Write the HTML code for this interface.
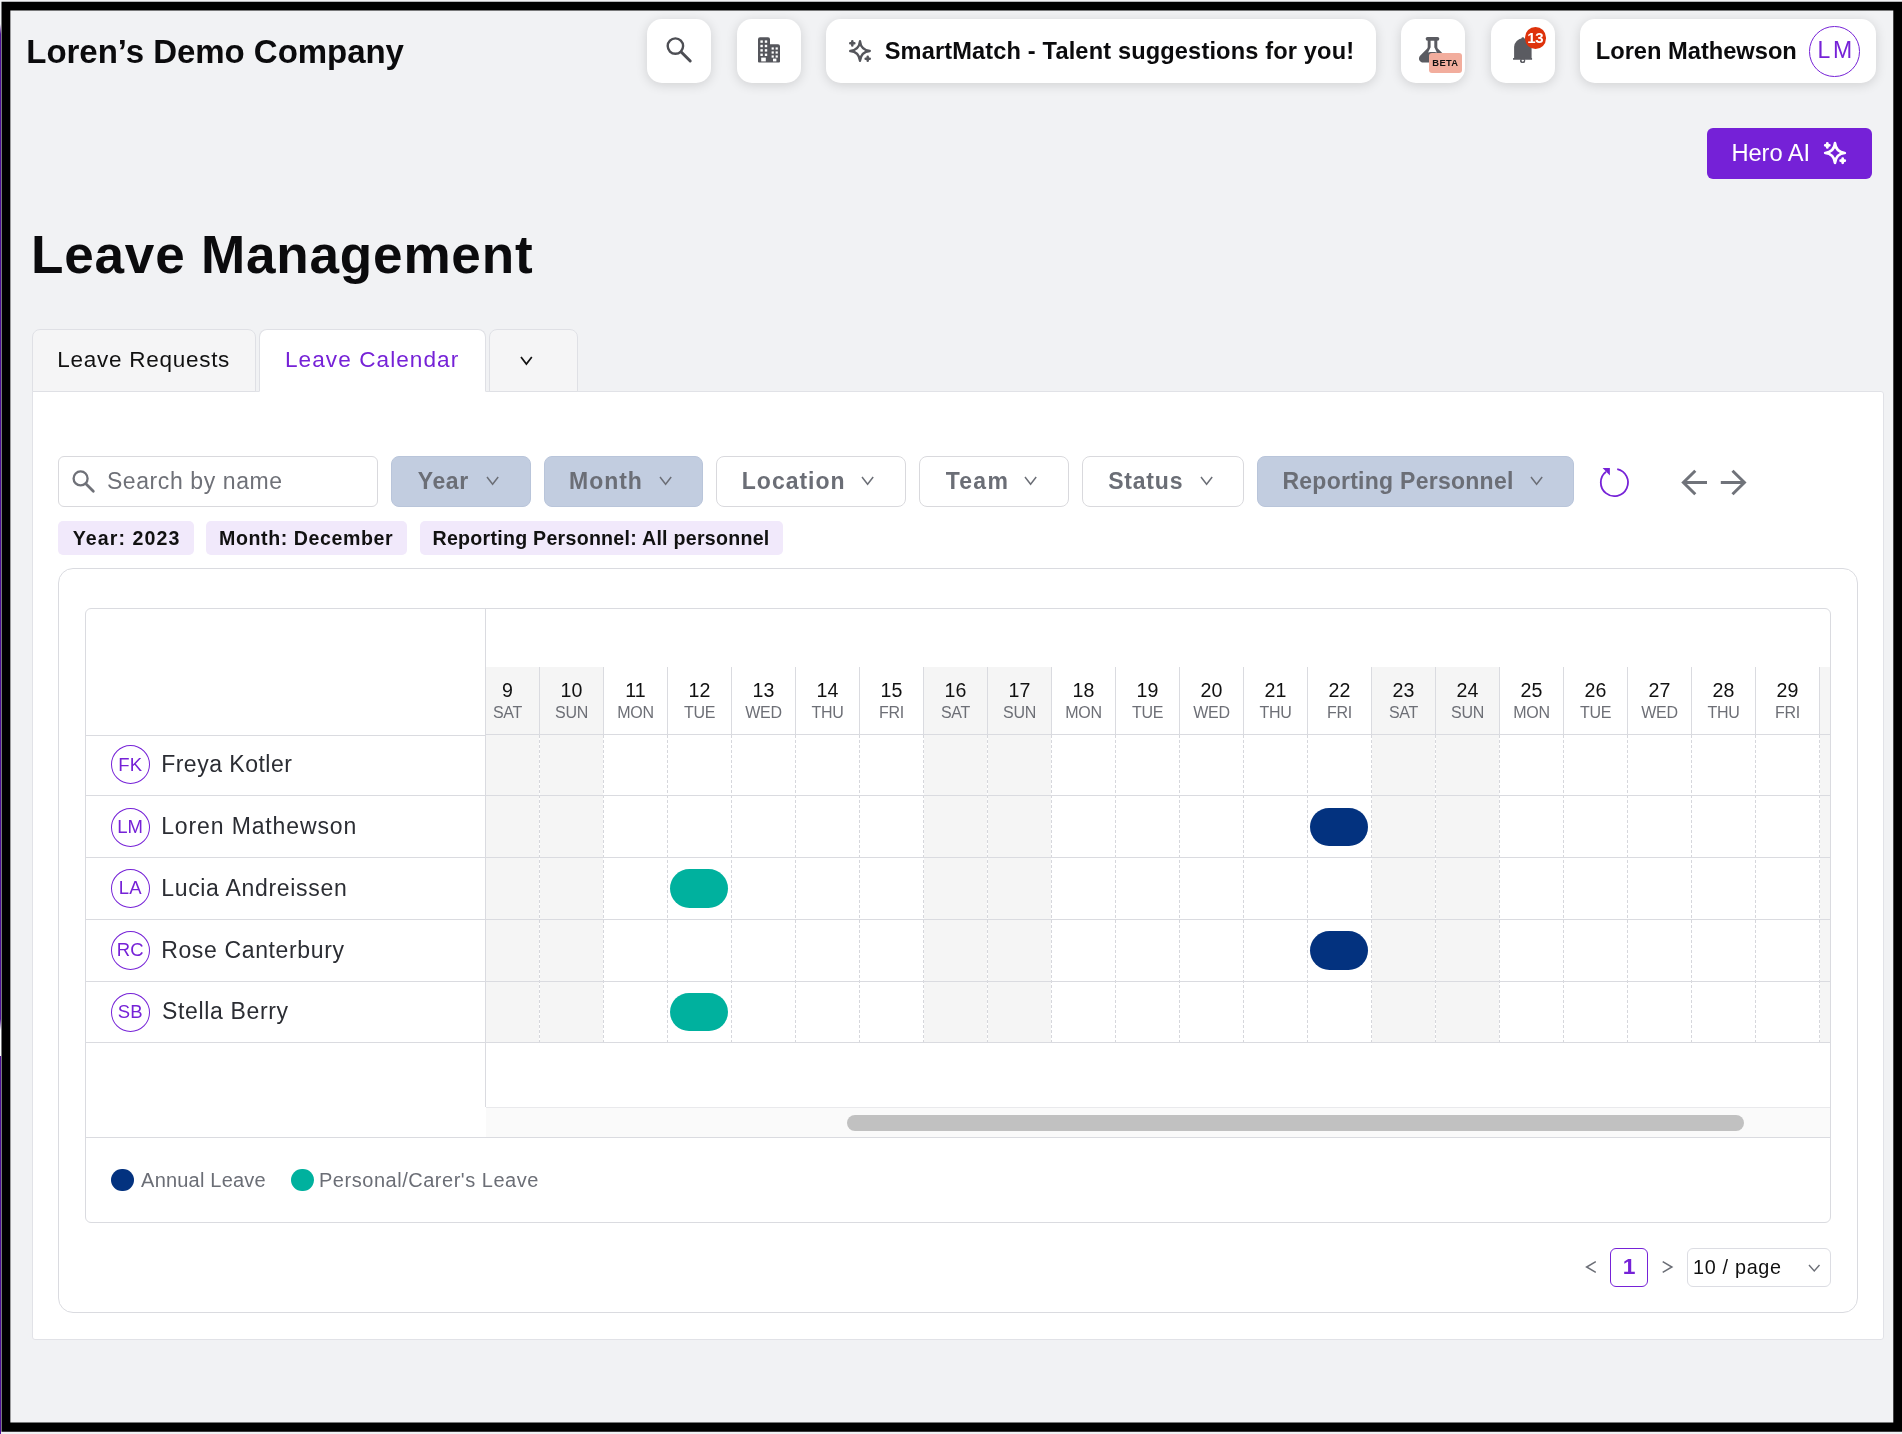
<!DOCTYPE html>
<html lang="en"><head><meta charset="utf-8"><title>Leave Management</title><style>
html,body{margin:0;padding:0;}
body{width:1902px;height:1434px;position:relative;overflow:hidden;font-family:"Liberation Sans", sans-serif;background:#f1f2f4;}
#root{position:absolute;left:0;top:0;width:1902px;height:1434px;will-change:transform;}
.t{position:absolute;white-space:nowrap;margin:0;font-weight:400;}
.a{position:absolute;overflow:visible;}
</style></head><body>
<div id="root">
<div style="position:absolute;left:0px;top:24px;width:1.3px;height:1410px;background:linear-gradient(#f1f2f4,#4f0f99 10px,#4f0f99);"></div>
<div style="position:absolute;left:0px;top:1019px;width:1.3px;height:37px;background:linear-gradient(#4f0f99,#fff 11px,#fff);"></div>
<svg class="a" style="left:0;top:0" width="1902" height="1434" viewBox="0 0 1902 1434"><path fill="#000" fill-rule="evenodd" d="M1.5 1.7H1903V1431.7H1.5Z M10.35 10.5H1893.3V1422.4H10.35Z"/></svg>
<header>
<span class="t" style="top:35.07px;font-size:33px;line-height:33px;color:#0b0b0d;font-weight:700;letter-spacing:-0.036px;left:26.32px;">Loren’s Demo Company</span>
<div style="position:absolute;left:647px;top:19px;width:64px;height:64px;background:#fff;border-radius:15px;box-shadow:0 2px 12px rgba(0,0,10,.14);"></div>
<div style="position:absolute;left:737px;top:19px;width:64px;height:64px;background:#fff;border-radius:15px;box-shadow:0 2px 12px rgba(0,0,10,.14);"></div>
<div style="position:absolute;left:826px;top:19px;width:550px;height:64px;background:#fff;border-radius:15px;box-shadow:0 2px 12px rgba(0,0,10,.14);"></div>
<div style="position:absolute;left:1401px;top:19px;width:64px;height:64px;background:#fff;border-radius:15px;box-shadow:0 2px 12px rgba(0,0,10,.14);"></div>
<div style="position:absolute;left:1491px;top:19px;width:64px;height:64px;background:#fff;border-radius:15px;box-shadow:0 2px 12px rgba(0,0,10,.14);"></div>
<div style="position:absolute;left:1580px;top:19px;width:296px;height:64px;background:#fff;border-radius:15px;box-shadow:0 2px 12px rgba(0,0,10,.14);"></div>
<svg class="a" style="left:660px;top:32px" width="40" height="40" viewBox="0 0 40 40"><circle cx="15.4" cy="14.1" r="7.7" fill="none" stroke="#4d4e54" stroke-width="2.4"/><path d="M21.2 20 L30.2 29" stroke="#4d4e54" stroke-width="3" stroke-linecap="round"/></svg>
<svg class="a" style="left:757px;top:36px" width="24" height="28" viewBox="0 0 24 28"><path fill="#55565c" d="M1 3.3a2 2 0 0 1 2-2h8a2 2 0 0 1 2 2v4.9h8a2 2 0 0 1 2 2v15.4a1 1 0 0 1-1 1H2a1 1 0 0 1-1-1z"/><g fill="#fff"><rect x="3.4" y="4.4" width="2.4" height="2.4"/><rect x="7.8" y="4.4" width="2.4" height="2.4"/><rect x="3.4" y="8.8" width="2.4" height="2.4"/><rect x="7.8" y="8.8" width="2.4" height="2.4"/><rect x="3.4" y="13.2" width="2.4" height="2.4"/><rect x="7.8" y="13.2" width="2.4" height="2.4"/><rect x="3.4" y="17.6" width="2.4" height="2.4"/><rect x="7.8" y="17.6" width="2.4" height="2.4"/><rect x="4.2" y="21.6" width="4.6" height="3.8"/><rect x="14.6" y="11.4" width="2.2" height="2.2"/><rect x="18.6" y="11.4" width="2.2" height="2.2"/><rect x="14.6" y="15.4" width="2.2" height="2.2"/><rect x="18.6" y="15.4" width="2.2" height="2.2"/><rect x="14.6" y="19.4" width="2.2" height="2.2"/><rect x="18.6" y="19.4" width="2.2" height="2.2"/><rect x="16" y="22.6" width="3.4" height="2.8"/></g></svg>
<svg class="a" style="left:845.8px;top:36.7px" width="28" height="28" viewBox="-14 -14 28 28" fill="none" stroke="#55565c" stroke-linecap="round" stroke-linejoin="round"><path stroke-width="2.3" d="M0 -9.800C.6 -3.900 3.900 -.6 9.800 0C3.900 .6 .6 3.900 0 9.800C-.6 3.900 -3.900 .6 -9.800 0C-3.900 -.6 -.6 -3.900 0 -9.800Z"/><path stroke-width="2.5" d="M-7.700 -9.700v4.100M-9.750 -7.650h4.100M7.700 5.650v4.100M5.650 7.700h4.100"/></svg>
<span class="t" style="top:39.62px;font-size:23.6px;line-height:23.6px;color:#0b0b0d;font-weight:700;letter-spacing:0.149px;left:884.63px;">SmartMatch - Talent suggestions for you!</span>
<svg class="a" style="left:1417px;top:36px" width="32" height="28" viewBox="0 0 32 28"><path fill="#5a5b61" d="M10.7 4.7H10.5a1.85 1.85 0 0 1 0-3.700h10a1.850 1.850 0 0 1 0 3.700h-.2V10.800c0 1.100.5 1.800 1.200 2.500l6.200 6.200c2.600 2.600 1.200 7.100-3.200 7.100H6.500c-4.400 0-5.800-4.500-3.200-7.100l6.200-6.200c.7-.7 1.200-1.400 1.200-2.500z"/><path fill="#fff" d="M13.600 4.700h3.700v6.500l2.600 5.200c-3-.5-5.800-.5-8.800 0l2.500-5.200z"/></svg>
<div style="position:absolute;left:1429.1px;top:53.1px;width:32.8px;height:19.9px;background:#f2ad9d;border-radius:3px;"></div>
<span class="t" style="top:57.84px;font-size:9.4px;line-height:9.4px;color:#111;font-weight:700;letter-spacing:0.327px;left:1432.34px;">BETA</span>
<svg class="a" style="left:1510px;top:35px" width="26" height="30" viewBox="0 0 26 30"><g fill="#5a5b61"><circle cx="12.85" cy="3.600" r="1.400"/><path d="M4.100 23.200V12.100a8.750 8.750 0 0 1 17.500 0V23.200z"/><rect x="3" y="22.900" width="19.100" height="1.950" rx=".5"/></g><path fill="none" stroke="#5a5b61" stroke-width="1.200" d="M10.700 25a2 2 0 0 0 4 .6"/><circle cx="12.700" cy="25.600" r="1.900" fill="none" stroke="#5a5b61" stroke-width="1.200"/></svg>
<div style="position:absolute;left:1525px;top:27.2px;width:21.4px;height:21.4px;background:#de320b;border-radius:50%;"></div>
<span class="t" style="top:30.40px;font-size:15px;line-height:15px;color:#fff;font-weight:700;letter-spacing:-0.342px;left:1527.2px;">13</span>
<span class="t" style="top:39.64px;font-size:23.7px;line-height:23.7px;color:#0b0b0d;font-weight:700;letter-spacing:-0.021px;left:1595.78px;">Loren Mathewson</span>
<div style="position:absolute;left:1809px;top:26px;width:50.6px;height:50.6px;border:1.3px solid #7622d7;border-radius:50%;box-sizing:border-box;"></div>
<span class="t" style="top:38.63px;font-size:23px;line-height:23px;color:#7622d7;letter-spacing:2.768px;left:1817.46px;">LM</span>
</header>
<main>
<div style="position:absolute;left:1707px;top:128px;width:165px;height:51px;background:#7521d7;border-radius:6px;"></div>
<span class="t" style="top:141.74px;font-size:23.7px;line-height:23.7px;color:#fff;letter-spacing:-0.061px;left:1731.4px;">Hero AI</span>
<svg class="a" style="left:1820.6px;top:138.7px" width="28" height="28" viewBox="-14 -14 28 28" fill="none" stroke="#fff" stroke-linecap="round" stroke-linejoin="round"><path stroke-width="2.7" d="M0 -9.800C.6 -3.900 3.900 -.6 9.800 0C3.900 .6 .6 3.900 0 9.800C-.6 3.900 -3.900 .6 -9.800 0C-3.900 -.6 -.6 -3.900 0 -9.800Z"/><path stroke-width="2.8" d="M-7.700 -9.700v4.100M-9.750 -7.650h4.100M7.700 5.650v4.100M5.650 7.700h4.100"/></svg>
<h1 class="t" style="top:228.05px;font-size:53.1px;line-height:53.1px;color:#0b0b0d;font-weight:700;letter-spacing:0.784px;left:31.01px;">Leave Management</h1>
<nav>
<div style="position:absolute;left:32px;top:391px;width:1852px;height:949px;background:#fff;border:1px solid #e1e2e7;box-sizing:border-box;border-radius:0 3px 3px 3px;"></div>
<div style="position:absolute;left:32px;top:329px;width:224px;height:63px;box-sizing:border-box;border:1px solid #dfe0e5;border-radius:8px 8px 0 0;background:#f5f5f6;"></div>
<div style="position:absolute;left:259px;top:329px;width:227px;height:63px;box-sizing:border-box;border:1px solid #dfe0e5;border-radius:8px 8px 0 0;background:#fff;border-bottom-color:#fff;"></div>
<div style="position:absolute;left:489px;top:329px;width:89px;height:63px;box-sizing:border-box;border:1px solid #dfe0e5;border-radius:8px 8px 0 0;background:#f5f5f6;"></div>
<span class="t" style="top:349.05px;font-size:22.5px;line-height:22.5px;color:#111;letter-spacing:0.736px;left:57.2px;">Leave Requests</span>
<span class="t" style="top:349.27px;font-size:22.6px;line-height:22.6px;color:#7622d7;letter-spacing:1.056px;left:284.99px;">Leave Calendar</span>
<svg class="a" style="left:519.3000000000001px;top:354.7px" width="14.8" height="11" viewBox="-2 -2 14.8 11"><path d="M0 0 L5.4 7 L10.8 0" fill="none" stroke="#111" stroke-width="1.7"/></svg>
</nav>
<section class="filters">
<div style="position:absolute;left:58px;top:456px;width:320px;height:51px;box-sizing:border-box;border:1px solid #d9d9dd;border-radius:6px;background:#fff;"></div>
<svg class="a" style="left:70px;top:468px" width="28" height="28" viewBox="0 0 28 28"><circle cx="10.6" cy="10.400" r="7" fill="none" stroke="#6f7178" stroke-width="2.3"/><path d="M15.800 15.800 L23.300 23.200" stroke="#6f7178" stroke-width="2.800" stroke-linecap="round"/></svg>
<span class="t" style="top:469.73px;font-size:23px;line-height:23px;color:#6f7178;letter-spacing:0.598px;left:106.88px;">Search by name</span>
<div style="position:absolute;left:391px;top:456px;width:140px;height:51px;background:#c2cde0;border-radius:8px;box-sizing:border-box;border:1px solid #b9c5da;"></div>
<span class="t" style="top:470.33px;font-size:23px;line-height:23px;color:#6b6e76;font-weight:700;letter-spacing:0.612px;left:417.77px;">Year</span>
<svg class="a" style="left:485.4px;top:475.4px" width="15.2" height="11.2" viewBox="-2 -2 15.2 11.2"><path d="M0 0 L5.6 7.2 L11.2 0" fill="none" stroke="#6b6e76" stroke-width="1.5"/></svg>
<div style="position:absolute;left:544px;top:456px;width:159px;height:51px;background:#c2cde0;border-radius:8px;box-sizing:border-box;border:1px solid #b9c5da;"></div>
<span class="t" style="top:470.33px;font-size:23px;line-height:23px;color:#6b6e76;font-weight:700;letter-spacing:0.953px;left:569.12px;">Month</span>
<svg class="a" style="left:658.0px;top:475.4px" width="15.2" height="11.2" viewBox="-2 -2 15.2 11.2"><path d="M0 0 L5.6 7.2 L11.2 0" fill="none" stroke="#6b6e76" stroke-width="1.5"/></svg>
<div style="position:absolute;left:716px;top:456px;width:190px;height:51px;background:#fff;border-radius:8px;box-sizing:border-box;border:1px solid #d9d9dd;"></div>
<span class="t" style="top:470.33px;font-size:23px;line-height:23px;color:#6b6e76;font-weight:700;letter-spacing:0.993px;left:741.82px;">Location</span>
<svg class="a" style="left:860.1px;top:475.4px" width="15.2" height="11.2" viewBox="-2 -2 15.2 11.2"><path d="M0 0 L5.6 7.2 L11.2 0" fill="none" stroke="#6b6e76" stroke-width="1.5"/></svg>
<div style="position:absolute;left:919px;top:456px;width:150px;height:51px;background:#fff;border-radius:8px;box-sizing:border-box;border:1px solid #d9d9dd;"></div>
<span class="t" style="top:470.33px;font-size:23px;line-height:23px;color:#6b6e76;font-weight:700;letter-spacing:1.272px;left:945.67px;">Team</span>
<svg class="a" style="left:1023.4000000000001px;top:475.4px" width="15.2" height="11.2" viewBox="-2 -2 15.2 11.2"><path d="M0 0 L5.6 7.2 L11.2 0" fill="none" stroke="#6b6e76" stroke-width="1.5"/></svg>
<div style="position:absolute;left:1082px;top:456px;width:162px;height:51px;background:#fff;border-radius:8px;box-sizing:border-box;border:1px solid #d9d9dd;"></div>
<span class="t" style="top:470.33px;font-size:23px;line-height:23px;color:#6b6e76;font-weight:700;letter-spacing:0.78px;left:1108.24px;">Status</span>
<svg class="a" style="left:1199.1000000000001px;top:475.4px" width="15.2" height="11.2" viewBox="-2 -2 15.2 11.2"><path d="M0 0 L5.6 7.2 L11.2 0" fill="none" stroke="#6b6e76" stroke-width="1.5"/></svg>
<div style="position:absolute;left:1257px;top:456px;width:317px;height:51px;background:#c2cde0;border-radius:8px;box-sizing:border-box;border:1px solid #b9c5da;"></div>
<span class="t" style="top:470.33px;font-size:23px;line-height:23px;color:#6b6e76;font-weight:700;letter-spacing:0.264px;left:1282.42px;">Reporting Personnel</span>
<svg class="a" style="left:1528.9px;top:475.4px" width="15.2" height="11.2" viewBox="-2 -2 15.2 11.2"><path d="M0 0 L5.6 7.2 L11.2 0" fill="none" stroke="#6b6e76" stroke-width="1.5"/></svg>
<svg class="a" style="left:0;top:0" width="1902" height="600" viewBox="0 0 1902 600"><path d="M1617.23 469.20 A13.6 13.6 0 1 1 1606.03 471.78" fill="none" stroke="#7622d7" stroke-width="1.8"/><path d="M1602.6 468 L1609.9 468 L1609.9 475.600 Z" fill="#7622d7"/><g fill="none" stroke="#70737a" stroke-width="3"><path d="M1707 482.5 H1683.5 M1695.3 470.8 L1683.4 482.5 L1695.300 494.2"/><path d="M1720.800 482.5 H1744.300 M1732.500 470.8 L1744.400 482.500 L1732.500 494.2"/></g></svg>
<div style="position:absolute;left:58px;top:521px;width:136px;height:34px;background:#f1e9fb;border-radius:5px;"></div>
<span class="t" style="top:528.61px;font-size:19.6px;line-height:19.6px;color:#111;font-weight:700;letter-spacing:1.09px;left:72.7px;">Year: 2023</span>
<div style="position:absolute;left:206px;top:521px;width:201px;height:34px;background:#f1e9fb;border-radius:5px;"></div>
<span class="t" style="top:528.61px;font-size:19.6px;line-height:19.6px;color:#111;font-weight:700;letter-spacing:0.573px;left:219.12px;">Month: December</span>
<div style="position:absolute;left:420px;top:521px;width:363px;height:34px;background:#f1e9fb;border-radius:5px;"></div>
<span class="t" style="top:528.61px;font-size:19.6px;line-height:19.6px;color:#111;font-weight:700;letter-spacing:0.264px;left:432.52px;">Reporting Personnel: All personnel</span>
</section>
<section class="calendar">
<div style="position:absolute;left:58px;top:568px;width:1800px;height:745px;box-sizing:border-box;border:1px solid #dadbe0;border-radius:15px;background:#fff;"></div>
<div style="position:absolute;left:85px;top:608px;width:1746px;height:615px;box-sizing:border-box;border:1px solid #dadbe0;border-radius:6px;background:#fff;"></div>
<div style="position:absolute;left:486px;top:667px;width:53px;height:376px;background:#f5f5f5;"></div>
<div style="position:absolute;left:540px;top:667px;width:63px;height:376px;background:#f5f5f5;"></div>
<div style="position:absolute;left:924px;top:667px;width:63px;height:376px;background:#f5f5f5;"></div>
<div style="position:absolute;left:988px;top:667px;width:63px;height:376px;background:#f5f5f5;"></div>
<div style="position:absolute;left:1372px;top:667px;width:63px;height:376px;background:#f5f5f5;"></div>
<div style="position:absolute;left:1436px;top:667px;width:63px;height:376px;background:#f5f5f5;"></div>
<div style="position:absolute;left:1820px;top:667px;width:10px;height:376px;background:#f5f5f5;"></div>
<div style="position:absolute;left:485px;top:609px;width:1px;height:498px;background:#dadbe0;"></div>
<div style="position:absolute;left:539px;top:667px;width:1px;height:68px;background:#dadbe0;"></div>
<div style="position:absolute;left:539px;top:735px;width:0px;height:308px;border-left:1px dashed #d6d7dc;"></div>
<div style="position:absolute;left:603px;top:667px;width:1px;height:68px;background:#dadbe0;"></div>
<div style="position:absolute;left:603px;top:735px;width:0px;height:308px;border-left:1px dashed #d6d7dc;"></div>
<div style="position:absolute;left:667px;top:667px;width:1px;height:68px;background:#dadbe0;"></div>
<div style="position:absolute;left:667px;top:735px;width:0px;height:308px;border-left:1px dashed #d6d7dc;"></div>
<div style="position:absolute;left:731px;top:667px;width:1px;height:68px;background:#dadbe0;"></div>
<div style="position:absolute;left:731px;top:735px;width:0px;height:308px;border-left:1px dashed #d6d7dc;"></div>
<div style="position:absolute;left:795px;top:667px;width:1px;height:68px;background:#dadbe0;"></div>
<div style="position:absolute;left:795px;top:735px;width:0px;height:308px;border-left:1px dashed #d6d7dc;"></div>
<div style="position:absolute;left:859px;top:667px;width:1px;height:68px;background:#dadbe0;"></div>
<div style="position:absolute;left:859px;top:735px;width:0px;height:308px;border-left:1px dashed #d6d7dc;"></div>
<div style="position:absolute;left:923px;top:667px;width:1px;height:68px;background:#dadbe0;"></div>
<div style="position:absolute;left:923px;top:735px;width:0px;height:308px;border-left:1px dashed #d6d7dc;"></div>
<div style="position:absolute;left:987px;top:667px;width:1px;height:68px;background:#dadbe0;"></div>
<div style="position:absolute;left:987px;top:735px;width:0px;height:308px;border-left:1px dashed #d6d7dc;"></div>
<div style="position:absolute;left:1051px;top:667px;width:1px;height:68px;background:#dadbe0;"></div>
<div style="position:absolute;left:1051px;top:735px;width:0px;height:308px;border-left:1px dashed #d6d7dc;"></div>
<div style="position:absolute;left:1115px;top:667px;width:1px;height:68px;background:#dadbe0;"></div>
<div style="position:absolute;left:1115px;top:735px;width:0px;height:308px;border-left:1px dashed #d6d7dc;"></div>
<div style="position:absolute;left:1179px;top:667px;width:1px;height:68px;background:#dadbe0;"></div>
<div style="position:absolute;left:1179px;top:735px;width:0px;height:308px;border-left:1px dashed #d6d7dc;"></div>
<div style="position:absolute;left:1243px;top:667px;width:1px;height:68px;background:#dadbe0;"></div>
<div style="position:absolute;left:1243px;top:735px;width:0px;height:308px;border-left:1px dashed #d6d7dc;"></div>
<div style="position:absolute;left:1307px;top:667px;width:1px;height:68px;background:#dadbe0;"></div>
<div style="position:absolute;left:1307px;top:735px;width:0px;height:308px;border-left:1px dashed #d6d7dc;"></div>
<div style="position:absolute;left:1371px;top:667px;width:1px;height:68px;background:#dadbe0;"></div>
<div style="position:absolute;left:1371px;top:735px;width:0px;height:308px;border-left:1px dashed #d6d7dc;"></div>
<div style="position:absolute;left:1435px;top:667px;width:1px;height:68px;background:#dadbe0;"></div>
<div style="position:absolute;left:1435px;top:735px;width:0px;height:308px;border-left:1px dashed #d6d7dc;"></div>
<div style="position:absolute;left:1499px;top:667px;width:1px;height:68px;background:#dadbe0;"></div>
<div style="position:absolute;left:1499px;top:735px;width:0px;height:308px;border-left:1px dashed #d6d7dc;"></div>
<div style="position:absolute;left:1563px;top:667px;width:1px;height:68px;background:#dadbe0;"></div>
<div style="position:absolute;left:1563px;top:735px;width:0px;height:308px;border-left:1px dashed #d6d7dc;"></div>
<div style="position:absolute;left:1627px;top:667px;width:1px;height:68px;background:#dadbe0;"></div>
<div style="position:absolute;left:1627px;top:735px;width:0px;height:308px;border-left:1px dashed #d6d7dc;"></div>
<div style="position:absolute;left:1691px;top:667px;width:1px;height:68px;background:#dadbe0;"></div>
<div style="position:absolute;left:1691px;top:735px;width:0px;height:308px;border-left:1px dashed #d6d7dc;"></div>
<div style="position:absolute;left:1755px;top:667px;width:1px;height:68px;background:#dadbe0;"></div>
<div style="position:absolute;left:1755px;top:735px;width:0px;height:308px;border-left:1px dashed #d6d7dc;"></div>
<div style="position:absolute;left:1819px;top:667px;width:1px;height:68px;background:#dadbe0;"></div>
<div style="position:absolute;left:1819px;top:735px;width:0px;height:308px;border-left:1px dashed #d6d7dc;"></div>
<div style="position:absolute;left:86px;top:735px;width:399px;height:1px;background:#dadbe0;"></div>
<div style="position:absolute;left:486px;top:734px;width:1344px;height:1px;background:#dadbe0;"></div>
<div style="position:absolute;left:86px;top:795px;width:1744px;height:1px;background:#dadbe0;"></div>
<div style="position:absolute;left:86px;top:857px;width:1744px;height:1px;background:#dadbe0;"></div>
<div style="position:absolute;left:86px;top:919px;width:1744px;height:1px;background:#dadbe0;"></div>
<div style="position:absolute;left:86px;top:981px;width:1744px;height:1px;background:#dadbe0;"></div>
<div style="position:absolute;left:86px;top:1042px;width:1744px;height:1px;background:#dadbe0;"></div>
<span class="t" style="top:681.01px;font-size:19.6px;line-height:19.6px;color:#111;left:407.5px;width:200px;text-align:center;">9</span>
<span class="t" style="top:705.26px;font-size:16px;line-height:16px;color:#6d6f76;letter-spacing:-0.3px;left:407.5px;width:200px;text-align:center;">SAT</span>
<span class="t" style="top:681.01px;font-size:19.6px;line-height:19.6px;color:#111;left:471.5px;width:200px;text-align:center;">10</span>
<span class="t" style="top:705.26px;font-size:16px;line-height:16px;color:#6d6f76;letter-spacing:-0.3px;left:471.5px;width:200px;text-align:center;">SUN</span>
<span class="t" style="top:681.01px;font-size:19.6px;line-height:19.6px;color:#111;left:535.5px;width:200px;text-align:center;">11</span>
<span class="t" style="top:705.26px;font-size:16px;line-height:16px;color:#6d6f76;letter-spacing:-0.3px;left:535.5px;width:200px;text-align:center;">MON</span>
<span class="t" style="top:681.01px;font-size:19.6px;line-height:19.6px;color:#111;left:599.5px;width:200px;text-align:center;">12</span>
<span class="t" style="top:705.26px;font-size:16px;line-height:16px;color:#6d6f76;letter-spacing:-0.3px;left:599.5px;width:200px;text-align:center;">TUE</span>
<span class="t" style="top:681.01px;font-size:19.6px;line-height:19.6px;color:#111;left:663.5px;width:200px;text-align:center;">13</span>
<span class="t" style="top:705.26px;font-size:16px;line-height:16px;color:#6d6f76;letter-spacing:-0.3px;left:663.5px;width:200px;text-align:center;">WED</span>
<span class="t" style="top:681.01px;font-size:19.6px;line-height:19.6px;color:#111;left:727.5px;width:200px;text-align:center;">14</span>
<span class="t" style="top:705.26px;font-size:16px;line-height:16px;color:#6d6f76;letter-spacing:-0.3px;left:727.5px;width:200px;text-align:center;">THU</span>
<span class="t" style="top:681.01px;font-size:19.6px;line-height:19.6px;color:#111;left:791.5px;width:200px;text-align:center;">15</span>
<span class="t" style="top:705.26px;font-size:16px;line-height:16px;color:#6d6f76;letter-spacing:-0.3px;left:791.5px;width:200px;text-align:center;">FRI</span>
<span class="t" style="top:681.01px;font-size:19.6px;line-height:19.6px;color:#111;left:855.5px;width:200px;text-align:center;">16</span>
<span class="t" style="top:705.26px;font-size:16px;line-height:16px;color:#6d6f76;letter-spacing:-0.3px;left:855.5px;width:200px;text-align:center;">SAT</span>
<span class="t" style="top:681.01px;font-size:19.6px;line-height:19.6px;color:#111;left:919.5px;width:200px;text-align:center;">17</span>
<span class="t" style="top:705.26px;font-size:16px;line-height:16px;color:#6d6f76;letter-spacing:-0.3px;left:919.5px;width:200px;text-align:center;">SUN</span>
<span class="t" style="top:681.01px;font-size:19.6px;line-height:19.6px;color:#111;left:983.5px;width:200px;text-align:center;">18</span>
<span class="t" style="top:705.26px;font-size:16px;line-height:16px;color:#6d6f76;letter-spacing:-0.3px;left:983.5px;width:200px;text-align:center;">MON</span>
<span class="t" style="top:681.01px;font-size:19.6px;line-height:19.6px;color:#111;left:1047.5px;width:200px;text-align:center;">19</span>
<span class="t" style="top:705.26px;font-size:16px;line-height:16px;color:#6d6f76;letter-spacing:-0.3px;left:1047.5px;width:200px;text-align:center;">TUE</span>
<span class="t" style="top:681.01px;font-size:19.6px;line-height:19.6px;color:#111;left:1111.5px;width:200px;text-align:center;">20</span>
<span class="t" style="top:705.26px;font-size:16px;line-height:16px;color:#6d6f76;letter-spacing:-0.3px;left:1111.5px;width:200px;text-align:center;">WED</span>
<span class="t" style="top:681.01px;font-size:19.6px;line-height:19.6px;color:#111;left:1175.5px;width:200px;text-align:center;">21</span>
<span class="t" style="top:705.26px;font-size:16px;line-height:16px;color:#6d6f76;letter-spacing:-0.3px;left:1175.5px;width:200px;text-align:center;">THU</span>
<span class="t" style="top:681.01px;font-size:19.6px;line-height:19.6px;color:#111;left:1239.5px;width:200px;text-align:center;">22</span>
<span class="t" style="top:705.26px;font-size:16px;line-height:16px;color:#6d6f76;letter-spacing:-0.3px;left:1239.5px;width:200px;text-align:center;">FRI</span>
<span class="t" style="top:681.01px;font-size:19.6px;line-height:19.6px;color:#111;left:1303.5px;width:200px;text-align:center;">23</span>
<span class="t" style="top:705.26px;font-size:16px;line-height:16px;color:#6d6f76;letter-spacing:-0.3px;left:1303.5px;width:200px;text-align:center;">SAT</span>
<span class="t" style="top:681.01px;font-size:19.6px;line-height:19.6px;color:#111;left:1367.5px;width:200px;text-align:center;">24</span>
<span class="t" style="top:705.26px;font-size:16px;line-height:16px;color:#6d6f76;letter-spacing:-0.3px;left:1367.5px;width:200px;text-align:center;">SUN</span>
<span class="t" style="top:681.01px;font-size:19.6px;line-height:19.6px;color:#111;left:1431.5px;width:200px;text-align:center;">25</span>
<span class="t" style="top:705.26px;font-size:16px;line-height:16px;color:#6d6f76;letter-spacing:-0.3px;left:1431.5px;width:200px;text-align:center;">MON</span>
<span class="t" style="top:681.01px;font-size:19.6px;line-height:19.6px;color:#111;left:1495.5px;width:200px;text-align:center;">26</span>
<span class="t" style="top:705.26px;font-size:16px;line-height:16px;color:#6d6f76;letter-spacing:-0.3px;left:1495.5px;width:200px;text-align:center;">TUE</span>
<span class="t" style="top:681.01px;font-size:19.6px;line-height:19.6px;color:#111;left:1559.5px;width:200px;text-align:center;">27</span>
<span class="t" style="top:705.26px;font-size:16px;line-height:16px;color:#6d6f76;letter-spacing:-0.3px;left:1559.5px;width:200px;text-align:center;">WED</span>
<span class="t" style="top:681.01px;font-size:19.6px;line-height:19.6px;color:#111;left:1623.5px;width:200px;text-align:center;">28</span>
<span class="t" style="top:705.26px;font-size:16px;line-height:16px;color:#6d6f76;letter-spacing:-0.3px;left:1623.5px;width:200px;text-align:center;">THU</span>
<span class="t" style="top:681.01px;font-size:19.6px;line-height:19.6px;color:#111;left:1687.5px;width:200px;text-align:center;">29</span>
<span class="t" style="top:705.26px;font-size:16px;line-height:16px;color:#6d6f76;letter-spacing:-0.3px;left:1687.5px;width:200px;text-align:center;">FRI</span>
<div style="position:absolute;left:110.6px;top:745.4px;width:39.2px;height:39px;box-sizing:border-box;border:1.2px solid #7622d7;border-radius:50%;"></div>
<span class="t" style="top:755.74px;font-size:18.5px;line-height:18.5px;color:#7622d7;left:30.19999999999999px;width:200px;text-align:center;">FK</span>
<span class="t" style="top:753.03px;font-size:23px;line-height:23px;color:#2b2d33;letter-spacing:0.498px;left:161.16px;">Freya Kotler</span>
<div style="position:absolute;left:110.6px;top:807.5px;width:39.2px;height:39px;box-sizing:border-box;border:1.2px solid #7622d7;border-radius:50%;"></div>
<span class="t" style="top:817.84px;font-size:18.5px;line-height:18.5px;color:#7622d7;left:30.19999999999999px;width:200px;text-align:center;">LM</span>
<span class="t" style="top:815.13px;font-size:23px;line-height:23px;color:#2b2d33;letter-spacing:0.879px;left:161.16px;">Loren Mathewson</span>
<div style="position:absolute;left:110.6px;top:869.1px;width:39.2px;height:39px;box-sizing:border-box;border:1.2px solid #7622d7;border-radius:50%;"></div>
<span class="t" style="top:879.44px;font-size:18.5px;line-height:18.5px;color:#7622d7;left:30.19999999999999px;width:200px;text-align:center;">LA</span>
<span class="t" style="top:876.73px;font-size:23px;line-height:23px;color:#2b2d33;letter-spacing:0.693px;left:161.16px;">Lucia Andreissen</span>
<div style="position:absolute;left:110.6px;top:930.9px;width:39.2px;height:39px;box-sizing:border-box;border:1.2px solid #7622d7;border-radius:50%;"></div>
<span class="t" style="top:941.24px;font-size:18.5px;line-height:18.5px;color:#7622d7;left:30.19999999999999px;width:200px;text-align:center;">RC</span>
<span class="t" style="top:938.53px;font-size:23px;line-height:23px;color:#2b2d33;letter-spacing:0.642px;left:161.16px;">Rose Canterbury</span>
<div style="position:absolute;left:110.6px;top:992.7px;width:39.2px;height:39px;box-sizing:border-box;border:1.2px solid #7622d7;border-radius:50%;"></div>
<span class="t" style="top:1003.04px;font-size:18.5px;line-height:18.5px;color:#7622d7;left:30.19999999999999px;width:200px;text-align:center;">SB</span>
<span class="t" style="top:1000.33px;font-size:23px;line-height:23px;color:#2b2d33;letter-spacing:0.64px;left:162.08px;">Stella Berry</span>
<div style="position:absolute;left:1310px;top:808px;width:58px;height:38px;background:#03327f;border-radius:20px;"></div>
<div style="position:absolute;left:670px;top:869px;width:58px;height:39px;background:#00b19e;border-radius:20px;"></div>
<div style="position:absolute;left:1310px;top:931px;width:58px;height:39px;background:#03327f;border-radius:20px;"></div>
<div style="position:absolute;left:670px;top:993px;width:58px;height:38px;background:#00b19e;border-radius:20px;"></div>
<div style="position:absolute;left:486px;top:1107px;width:1344px;height:30px;background:#fafafa;border-top:1px solid #e9e9ec;box-sizing:border-box;"></div>
<div style="position:absolute;left:847px;top:1115px;width:897px;height:16px;background:#c1c1c1;border-radius:8px;"></div>
<div style="position:absolute;left:86px;top:1137px;width:1744px;height:1px;background:#dadbe0;"></div>
<div style="position:absolute;left:111px;top:1168.5px;width:22.8px;height:22.8px;background:#03327f;border-radius:50%;"></div>
<span class="t" style="top:1170.27px;font-size:20px;line-height:20px;color:#6b6e76;letter-spacing:0.2px;left:141.1px;">Annual Leave</span>
<div style="position:absolute;left:291.1px;top:1168.5px;width:22.8px;height:22.8px;background:#00b19e;border-radius:50%;"></div>
<span class="t" style="top:1170.27px;font-size:20px;line-height:20px;color:#6b6e76;letter-spacing:0.526px;left:319.0px;">Personal/Carer's Leave</span>
<svg class="a" style="left:1580px;top:1255px" width="100" height="26" viewBox="0 0 100 26"><path d="M15.800 6.600 L6.600 12 L15.800 17.400 M82.700 6.600 L91.900 12 L82.700 17.400" fill="none" stroke="#6b6e76" stroke-width="1.5"/></svg>
<div style="position:absolute;left:1610px;top:1248px;width:38px;height:39px;box-sizing:border-box;border:1.4px solid #7622d7;border-radius:6px;background:#fff;"></div>
<span class="t" style="top:1255.00px;font-size:22.8px;line-height:22.8px;color:#7622d7;font-weight:700;left:1529px;width:200px;text-align:center;">1</span>
<div style="position:absolute;left:1687px;top:1248px;width:144px;height:39px;box-sizing:border-box;border:1px solid #dcdde3;border-radius:6px;background:#fff;"></div>
<span class="t" style="top:1257.74px;font-size:19.8px;line-height:19.8px;color:#111;letter-spacing:0.691px;left:1693.01px;">10 / page</span>
<svg class="a" style="left:1806.75px;top:1262.5px" width="14.5" height="10" viewBox="-2 -2 14.5 10"><path d="M0 0 L5.25 6 L10.5 0" fill="none" stroke="#6b6e76" stroke-width="1.4"/></svg>
</section>
</main>
</div>
</body></html>
